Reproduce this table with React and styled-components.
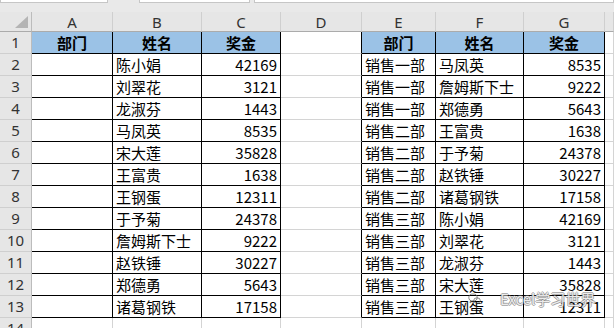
import React from "react";
import styled, { createGlobalStyle } from "styled-components";

const Global = createGlobalStyle`
  html, body { margin: 0; padding: 0; overflow: hidden; background: #fff; }
  body { font-family: "Noto Sans CJK SC", "Noto Sans", sans-serif; }
`;

const Page = styled.div`
  position: relative;
  width: 614px;
  height: 328px;
  overflow: hidden;
  background: #fff;
`;

const TopBar = styled.div`
  display: flex;
  height: 12px;
  gap: 31px;
  background: #e9e9e9;
  align-items: flex-start;
`;

const Field = styled.div`
  height: 2px;
  width: ${(p) => (p.$w ? `${p.$w}px` : "auto")};
  flex: ${(p) => (p.$w ? "none" : "1")};
  background: #fff;
  border: 1px solid #c6c6c6;
  border-top: none;
`;

const FieldGroup = styled.div`
  display: flex;
  flex: 1;
  gap: 4px;
`;

const Sheet = styled.div`
  display: grid;
  grid-template-columns: 32px 81px 89px 79px 81px 74px 88px 81px 1fr;
  grid-template-rows: 20px;
  grid-auto-rows: 22px;
`;

const ColHead = styled.div`
  box-sizing: border-box;
  background: #e6e6e6;
  border-right: 1px solid #cfcfcf;
  border-bottom: 1px solid #ababab;
  color: #333;
  font-family: "Noto Sans", sans-serif;
  font-size: 15px;
  display: flex;
  align-items: center;
  justify-content: center;
  line-height: 1;
  padding-top: 1px;
`;

const Corner = styled(ColHead)`
  border-right: 1px solid #bcbcbc;
  justify-content: flex-end;
  align-items: flex-end;
  padding: 0 3px 3px 0;
`;

const RowHead = styled.div`
  box-sizing: border-box;
  background: #e6e6e6;
  border-right: 1px solid #bcbcbc;
  border-bottom: 1px solid #cfcfcf;
  color: #333;
  font-family: "Noto Sans", sans-serif;
  font-size: 15px;
  display: flex;
  align-items: center;
  justify-content: center;
  line-height: 1;
`;

const Cell = styled.div`
  box-sizing: border-box;
  background: ${(p) => (p.$fill ? "#9bc2e6" : "#fff")};
  border-right: 1px solid ${(p) => (p.$rb ? "#000" : "#d4d4d4")};
  border-bottom: 1px solid ${(p) => (p.$bb ? "#000" : "#d4d4d4")};
  color: #000;
  font-size: 15px;
  font-weight: ${(p) => (p.$bold ? 700 : 400)};
  display: flex;
  align-items: center;
  justify-content: ${(p) =>
    p.$align === "right" ? "flex-end" : p.$align === "center" ? "center" : "flex-start"};
  padding: 0 3px 0 3px;
  white-space: nowrap;
  overflow: visible;
  line-height: 1;
`;

const Watermark = styled.div`
  position: absolute;
  left: 468px;
  top: 291px;
  display: flex;
  align-items: center;
  gap: 19px;
  pointer-events: none;
`;

const MarkText = styled.span`
  font-family: "Noto Sans CJK SC", sans-serif;
  font-size: 15px;
  line-height: 1;
  color: rgba(255, 255, 255, 0.85);
  text-shadow: 1px 0 0 rgba(110, 110, 110, 0.55), -1px 0 0 rgba(110, 110, 110, 0.55),
    0 1px 0 rgba(110, 110, 110, 0.55), 0 -1px 0 rgba(110, 110, 110, 0.55);
`;

const cols = ["A", "B", "C", "D", "E", "F", "G", ""];

const left = [
  ["陈小娟", 42169],
  ["刘翠花", 3121],
  ["龙淑芬", 1443],
  ["马凤英", 8535],
  ["宋大莲", 35828],
  ["王富贵", 1638],
  ["王钢蛋", 12311],
  ["于予菊", 24378],
  ["詹姆斯下士", 9222],
  ["赵铁锤", 30227],
  ["郑德勇", 5643],
  ["诸葛钢铁", 17158],
];

const right = [
  ["销售一部", "马凤英", 8535],
  ["销售一部", "詹姆斯下士", 9222],
  ["销售一部", "郑德勇", 5643],
  ["销售二部", "王富贵", 1638],
  ["销售二部", "于予菊", 24378],
  ["销售二部", "赵铁锤", 30227],
  ["销售二部", "诸葛钢铁", 17158],
  ["销售三部", "陈小娟", 42169],
  ["销售三部", "刘翠花", 3121],
  ["销售三部", "龙淑芬", 1443],
  ["销售三部", "宋大莲", 35828],
  ["销售三部", "王钢蛋", 12311],
];

const inTable = (r, c) => r >= 1 && r <= 13 && ((c >= 0 && c <= 2) || (c >= 4 && c <= 6));

const cellValue = (r, c) => {
  if (r === 1) {
    const h = ["部门", "姓名", "奖金"];
    if (c <= 2) return h[c];
    if (c >= 4 && c <= 6) return h[c - 4];
    return "";
  }
  if (r >= 2 && r <= 13) {
    const i = r - 2;
    if (c === 1) return left[i][0];
    if (c === 2) return left[i][1];
    if (c >= 4 && c <= 6) return right[i][c - 4];
  }
  return "";
};

const CornerMark = () => (
  <svg width="13" height="12" viewBox="0 0 13 12">
    <polygon points="13,0 13,12 0,12" fill="#b4b4b4" />
  </svg>
);

const WeIcon = () => (
  <svg width="13" height="12" viewBox="0 0 13 12" fill="none" stroke="rgba(90,90,90,0.75)" strokeWidth="0.9">
    <ellipse cx="5" cy="4.5" rx="4.2" ry="3.5" />
    <path d="M2.5 7.5 L2 10 L4.5 8.2" />
    <ellipse cx="9" cy="7.5" rx="3.3" ry="2.7" />
  </svg>
);

export default function App() {
  const rows = [];
  for (let r = 1; r <= 14; r++) {
    const cells = [<RowHead key={`h${r}`}>{r}</RowHead>];
    for (let c = 0; c < 8; c++) {
      const v = cellValue(r, c);
      const isHead = r === 1 && inTable(r, c);
      const isNum = typeof v === "number";
      cells.push(
        <Cell
          key={`${r}-${c}`}
          $fill={isHead}
          $bold={isHead}
          $align={isHead ? "center" : isNum ? "right" : "left"}
          $rb={inTable(r, c) || inTable(r, c + 1)}
          $bb={inTable(r, c) || inTable(r + 1, c)}
        >
          {v}
        </Cell>
      );
    }
    rows.push(cells);
  }

  return (
    <Page>
      <Global />
      <TopBar>
        <Field $w={106} />
        <FieldGroup>
          <Field $w={109} />
          <Field />
        </FieldGroup>
      </TopBar>
      <Sheet>
        <Corner>
          <CornerMark />
        </Corner>
        {cols.map((c, i) => (
          <ColHead key={i}>{c}</ColHead>
        ))}
        {rows}
      </Sheet>
      <Watermark>
        <WeIcon />
        <MarkText>Excel学习世界</MarkText>
      </Watermark>
    </Page>
  );
}
